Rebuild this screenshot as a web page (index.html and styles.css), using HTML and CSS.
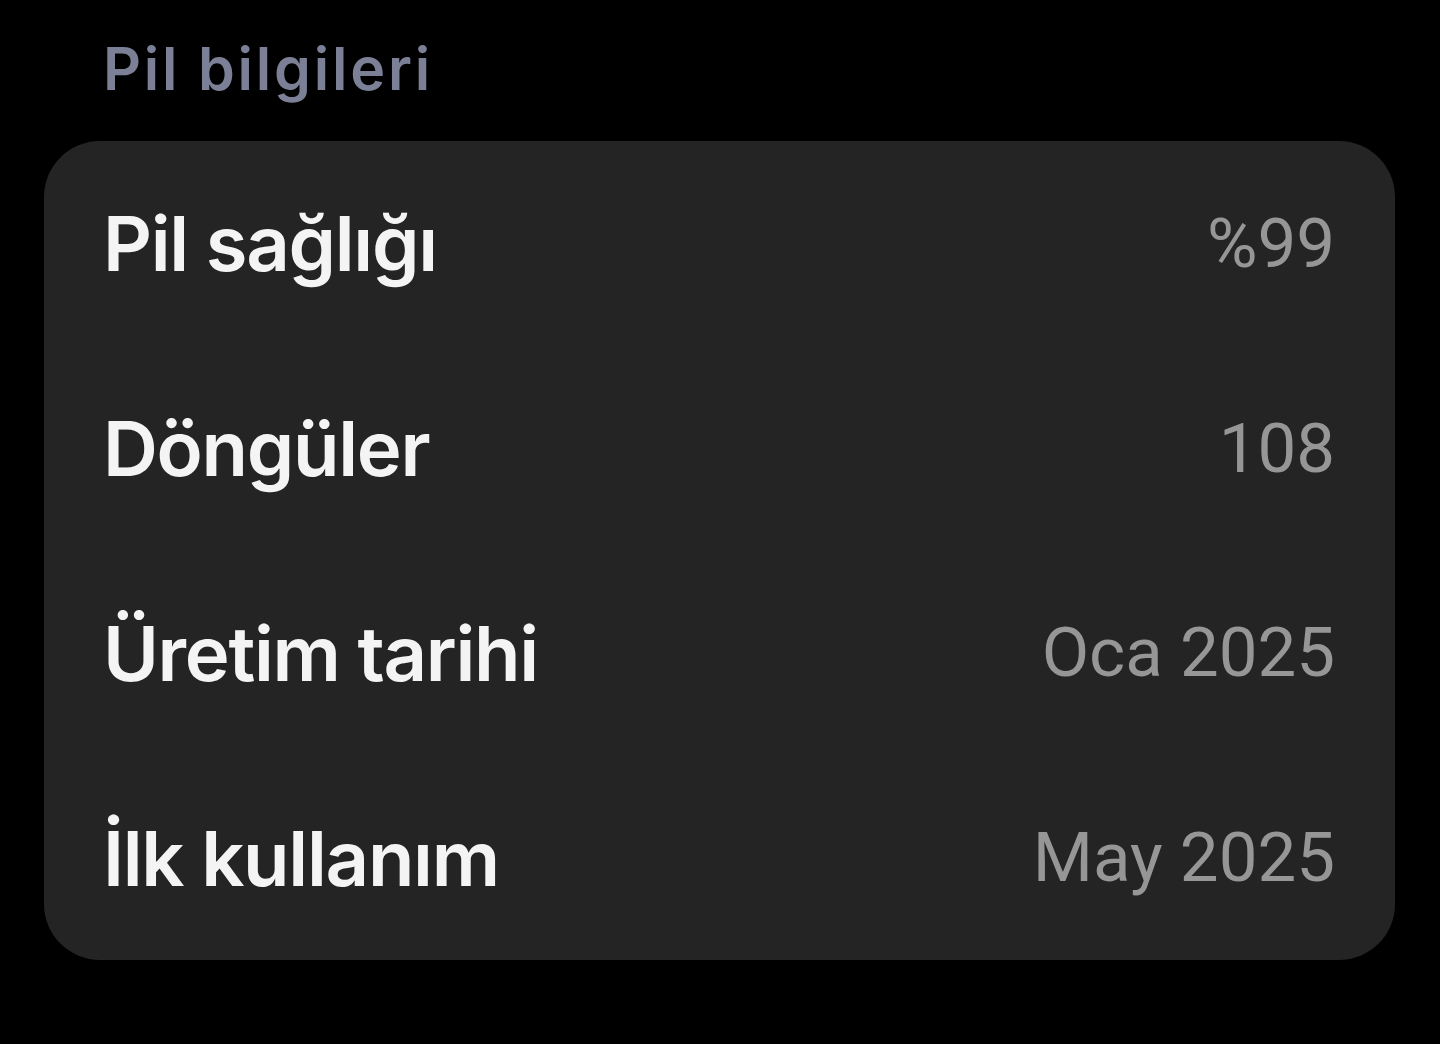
FILE: index.html
```html
<!DOCTYPE html>
<html lang="tr">
<head>
<meta charset="utf-8">
<link rel="stylesheet" href="styles.css">
</head>
<body>
<div class="page">
  <h2 class="section-title">Pil bilgileri</h2>
  <div class="card">
    <div class="row"><span class="label">Pil sağlığı</span><span class="value">%99</span></div>
    <div class="row"><span class="label">Döngüler</span><span class="value">108</span></div>
    <div class="row"><span class="label">Üretim tarihi</span><span class="value">Oca 2025</span></div>
    <div class="row"><span class="label">İlk kullanım</span><span class="value">May 2025</span></div>
  </div>
</div>
</body>
</html>
```
FILE: styles.css
```css
html, body {
  margin: 0;
  padding: 0;
  background: #000;
  width: 1440px;
  height: 1044px;
  overflow: hidden;
}
.page {
  font-family: Inter, "Noto Sans", sans-serif;
  padding: 0 45px 0 44px;
}
.section-title {
  margin: 0;
  height: 141px;
  box-sizing: border-box;
  padding: 29px 0 0 59px;
  font-size: 59px;
  font-weight: 600;
  line-height: 80px;
  letter-spacing: 2.8px;
  color: #7b8096;
}
.card {
  background: #242424;
  border-radius: 56px;
  height: 819px;
  padding: 0 60px 0 59px;
  display: flex;
  flex-direction: column;
}
.row {
  height: 205px;
  display: flex;
  align-items: center;
  justify-content: space-between;
}
.label {
  font-size: 76px;
  font-weight: 600;
  letter-spacing: -1.3px;
  color: #f4f4f4;
}
.value {
  font-family: Roboto, Inter, sans-serif;
  font-size: 69px;
  font-weight: 400;
  color: #969696;
}
```
